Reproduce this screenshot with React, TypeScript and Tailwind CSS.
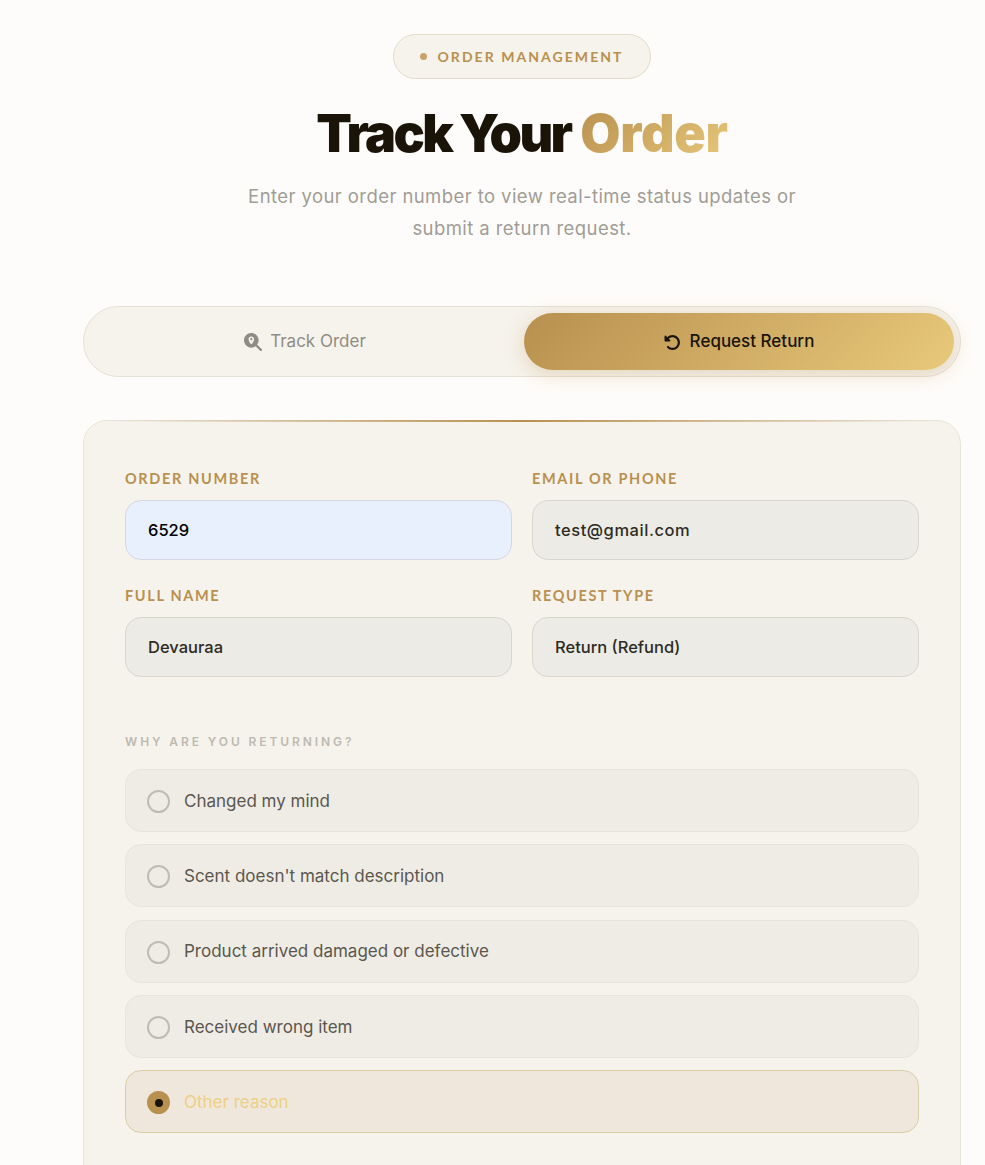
import { FaMagnifyingGlassLocation, FaRotateLeft } from "react-icons/fa6";

const reasons = ["Changed my mind", "Scent doesn't match description", "Product arrived damaged or defective", "Received wrong item"];

function Field({ label, value, autofill, wide }: { label: string; value: string; autofill?: boolean; wide?: boolean }) {
  return (
    <div className="flex flex-col">
      <div className="h-[16px] leading-[16px] text-[14.5px] font-bold tracking-[1.65px] text-[#b8904f] font-['Lato',sans-serif] mb-[13px]">{label}</div>
      <div className={`h-[60px] rounded-[16px] border flex items-center pl-[22px] text-[16.5px] font-[450] font-['Inter',sans-serif] ${wide ? "tracking-[0.55px]" : ""} ${autofill ? "bg-[#e8f0fe] border-[#d5d8e2] text-black" : "bg-[#ecebe5] border-[#d9d6cd] text-[#2e2b24]"}`}>{value}</div>
    </div>
  );
}

export default function App() {
  return (
    <div className="h-[1165px] overflow-hidden bg-[#fefcfa] pl-[83px] pr-[24px] pt-[34px] font-['Inter',sans-serif]">
      <div className="flex flex-col items-center">
        <div className="h-[45px] w-[258px] rounded-full border border-[#e3dccb] bg-[#f6f3ec] flex items-center justify-center gap-[10px]">
          <span className="w-[7px] h-[7px] rounded-full bg-[#c9a26b]" />
          <span className="text-[14px] font-bold tracking-[2.05px] text-[#b8904f] font-['Lato',sans-serif]">ORDER MANAGEMENT</span>
        </div>
        <h1 className="mt-[22px] h-[66px] leading-[66px] text-[52px] font-black tracking-[-2.6px] text-[#1a1408] font-['Inter',sans-serif]">
          Track Your <span className="ml-[2px] tracking-[-0.3px] bg-linear-135 from-[#b8904f] to-[#e8c97a] bg-clip-text text-transparent">Order</span>
        </h1>
        <p className="mt-[13px] w-[570px] text-center text-[18.5px] leading-[32px] tracking-[0.42px] text-[#a09d96]">
          Enter your order number to view real-time status updates or submit a return request.
        </p>
      </div>

      <div className="mt-[62px] h-[71px] rounded-full border border-[#e6e1d6] bg-[#f6f3ec] p-[6px] grid grid-cols-2 gap-[4px]">
        <div className="rounded-full flex items-center justify-center gap-[8px] pt-[1px] text-[#8f8c84] text-[17px]">
          <FaMagnifyingGlassLocation className="text-[18px]" />
          <span>Track Order</span>
        </div>
        <div className="rounded-full bg-linear-135 from-[#b8904f] to-[#e8c97a] shadow-[0_4px_20px_rgba(184,144,79,0.3)] flex items-center justify-center gap-[9px] pt-[1px] text-[#1a1408] text-[17px] font-medium">
          <FaRotateLeft className="text-[17px]" />
          <span>Request Return</span>
        </div>
      </div>

      <div className="relative mt-[43px] rounded-t-[24px] border border-[#e9e4da] bg-[#f6f3ec] px-[41px] pt-[50px] h-[800px]">
        <div className="absolute -top-px left-[24px] right-[24px] h-[2px] bg-gradient-to-r from-transparent via-[#b8904f] to-transparent" />
        <div className="grid grid-cols-2 gap-x-[20px] gap-y-[28px]">
          <Field label="ORDER NUMBER" value="6529" autofill />
          <Field label="EMAIL OR PHONE" value="test@gmail.com" wide />
          <Field label="FULL NAME" value="Devauraa" />
          <Field label="REQUEST TYPE" value="Return (Refund)" />
        </div>
        <div className="mt-[58px] h-[14px] leading-[14px] text-[12px] font-semibold tracking-[2.9px] text-[#bdbab2]">WHY ARE YOU RETURNING?</div>
        <div className="mt-[20px] flex flex-col gap-[12.25px]">
          {reasons.map((r) => (
            <div key={r} className="h-[63px] rounded-[16px] border border-[#e8e4da] bg-[#efece5] flex items-center pl-[21px] pt-[2px] gap-[14px]">
              <span className="w-[23px] h-[23px] rounded-full border-2 border-[#bfbcb4]" />
              <span className="text-[17px] text-[#5a574f]">{r}</span>
            </div>
          ))}
          <div className="h-[63px] rounded-[16px] border border-[#d9cfa6] bg-[#efe7db] flex items-center pl-[21px] pt-[2px] gap-[14px]">
            <span className="w-[23px] h-[23px] rounded-full bg-[#b8904f] flex items-center justify-center">
              <span className="w-[8px] h-[8px] rounded-full bg-[#1a1408]" />
            </span>
            <span className="text-[17px] text-[#edd084]">Other reason</span>
          </div>
        </div>
      </div>
    </div>
  );
}
